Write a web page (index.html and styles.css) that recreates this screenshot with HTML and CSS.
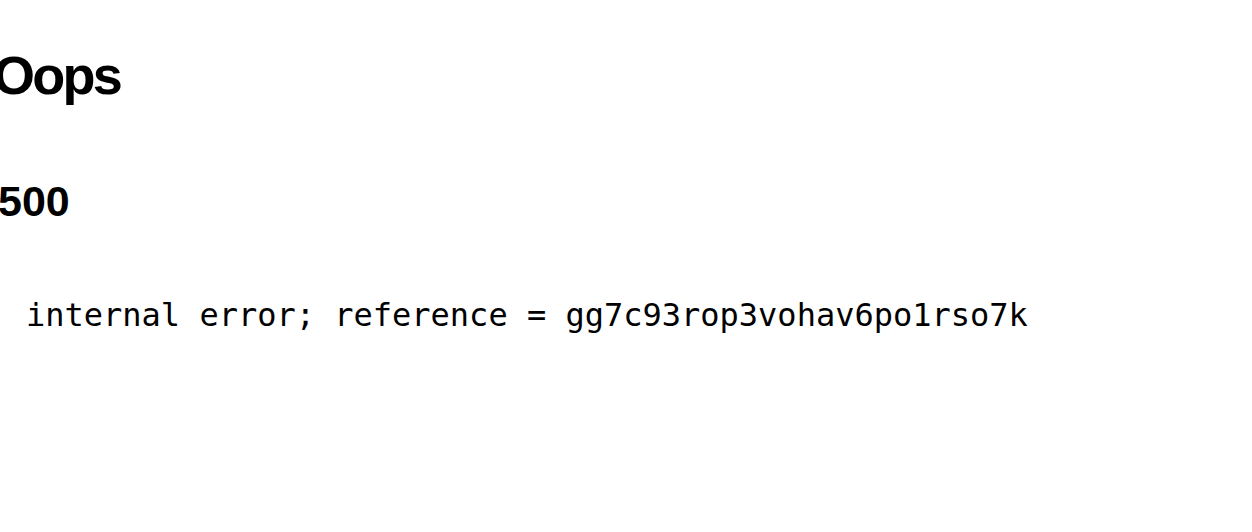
FILE: index.html
```html
<!DOCTYPE html>
<html>
<head>
<meta charset="utf-8">
<link rel="stylesheet" href="styles.css">
</head>
<body>
<main class="page">
  <h1 class="title">Oops</h1>
  <h2 class="code">500</h2>
  <pre class="msg">internal error; reference = gg7c93rop3vohav6po1rso7k</pre>
</main>
</body>
</html>
```
FILE: styles.css
```css
html, body {
  margin: 0;
  padding: 0;
  background: #ffffff;
  color: #000000;
}
.page {
  display: flex;
  flex-direction: column;
  align-items: flex-start;
  padding: 43px 0 0 0;
}
.title {
  font-family: "Liberation Sans", Arial, sans-serif;
  font-weight: bold;
  font-size: 54px;
  line-height: 64px;
  letter-spacing: -2.7px;
  margin: 0 0 0 -7px;
}
.code {
  font-family: "Liberation Sans", Arial, sans-serif;
  font-weight: bold;
  font-size: 43px;
  line-height: 48px;
  margin: 70px 0 0 -2px;
}
.msg {
  font-family: "DejaVu Sans Mono", monospace;
  font-size: 32px;
  line-height: 40px;
  margin: 70px 0 0 26px;
}
```
